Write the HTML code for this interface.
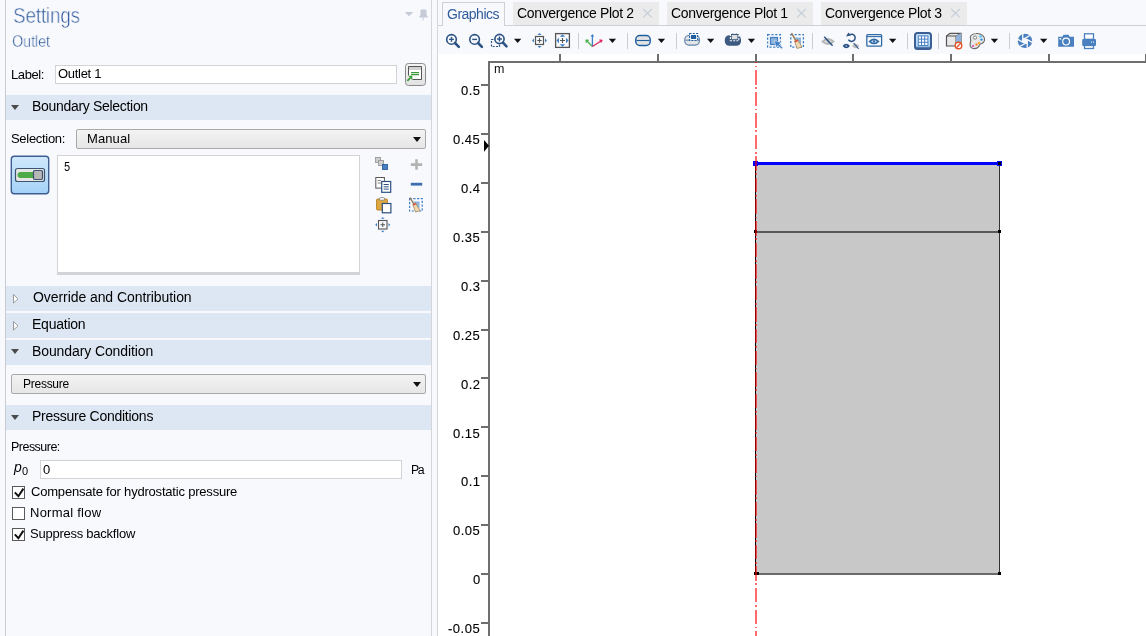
<!DOCTYPE html>
<html><head><meta charset="utf-8">
<style>
html,body{margin:0;padding:0;}
body{width:1146px;height:636px;overflow:hidden;position:relative;background:#f8f9fd;font-family:"Liberation Sans",sans-serif;color:#000;}
.a{position:absolute;}
.t{position:absolute;white-space:nowrap;line-height:1;will-change:transform;}
.hdr{position:absolute;left:6px;width:425px;height:25px;background:#dde7f3;}
.tri-d{position:absolute;width:0;height:0;border-left:4.7px solid transparent;border-right:4.7px solid transparent;border-top:5.6px solid #4a4a4a;}
.tri-r{position:absolute;}
.chk{position:absolute;left:12px;width:11px;height:11px;border:1px solid #5a5a5a;background:#fff;}
.dd{position:absolute;border:1px solid #a9a9a9;border-radius:2px;background:linear-gradient(#f3f3f3,#e6e6e6);}
.dtri{position:absolute;width:0;height:0;border-left:4px solid transparent;border-right:4px solid transparent;border-top:5px solid #111;}
.inp{position:absolute;background:#fff;border:1px solid #d3d3d6;}
.tab{position:absolute;top:2px;height:23px;background:#ebebeb;}
</style></head>
<body>
<!-- left panel -->
<div class="a" style="left:0;top:0;width:5px;height:636px;background:#f8f9fc"></div>
<div class="a" style="left:5px;top:0;width:1px;height:636px;background:#c9cbd0"></div>
<div class="a" style="left:431px;top:0;width:1px;height:636px;background:#d4d6da"></div>
<div class="a" style="left:437px;top:0;width:1px;height:636px;background:#d4d6da"></div>

<div class="t" style="left:13.4px;top:5.4px;font-size:22px;color:#2f5a9b;letter-spacing:-0.2px;transform:scaleX(0.86);transform-origin:0 0;-webkit-text-stroke:0.55px #f8f9fd">Settings</div>
<div class="t" style="left:12.2px;top:33.5px;font-size:16px;color:#2f5a9b;letter-spacing:-0.1px;transform:scaleX(0.9);transform-origin:0 0;-webkit-text-stroke:0.4px #f8f9fd">Outlet</div>

<!-- pin icons -->
<div class="tri-d" style="left:405px;top:12px;border-top-color:#c3cad6;border-left-width:4px;border-right-width:4px;border-top-width:4px"></div>

<div class="t" style="left:10.5px;top:67.8px;font-size:13px;letter-spacing:-0.4px">Label:</div>
<div class="inp" style="left:55px;top:65px;width:340px;height:17px"></div>
<div class="t" style="left:58px;top:67px;font-size:13px;letter-spacing:-0.3px">Outlet 1</div>

<div class="hdr" style="top:95px"></div>
<div class="tri-d" style="left:10.8px;top:104.5px"></div>
<div class="t" style="left:31.5px;top:99.4px;font-size:14px;letter-spacing:-0.31px">Boundary Selection</div>

<div class="t" style="left:10.7px;top:132px;font-size:13px;letter-spacing:-0.3px">Selection:</div>
<div class="dd" style="left:76px;top:129px;width:348px;height:18px"></div>
<div class="t" style="left:87.3px;top:132px;font-size:13px;letter-spacing:0.1px">Manual</div>
<div class="dtri" style="left:413px;top:137px"></div>

<div class="inp" style="left:57px;top:155px;width:301px;height:116px;border-bottom-width:3px"></div>
<div class="t" style="left:64.3px;top:160px;font-size:13px;transform:scaleX(0.85);transform-origin:0 0">5</div>

<div class="hdr" style="top:286px"></div>
<div class="t" style="left:32.7px;top:290px;font-size:14px;letter-spacing:-0.07px">Override and Contribution</div>
<div class="hdr" style="top:313px"></div>
<div class="t" style="left:32px;top:317px;font-size:14px;letter-spacing:-0.23px">Equation</div>
<div class="hdr" style="top:340px"></div>
<div class="tri-d" style="left:10.8px;top:349.3px"></div>
<div class="t" style="left:32px;top:344px;font-size:14px;letter-spacing:-0.1px">Boundary Condition</div>

<div class="dd" style="left:11px;top:374px;width:413px;height:18px"></div>
<div class="t" style="left:23.2px;top:377.8px;font-size:12px;letter-spacing:-0.26px">Pressure</div>
<div class="dtri" style="left:413px;top:382px"></div>

<div class="hdr" style="top:405px"></div>
<div class="tri-d" style="left:10.8px;top:414.7px"></div>
<div class="t" style="left:31.7px;top:409px;font-size:14px;letter-spacing:-0.26px">Pressure Conditions</div>

<div class="t" style="left:10.7px;top:441.4px;font-size:12.5px;letter-spacing:-0.52px">Pressure:</div>
<div class="t" style="left:13.8px;top:459.6px;font-size:14px;font-style:italic">p</div><div class="t" style="left:22.4px;top:465.8px;font-size:11px">0</div>
<div class="inp" style="left:40px;top:460px;width:360px;height:17px"></div>
<div class="t" style="left:43px;top:463px;font-size:13px">0</div>
<div class="t" style="left:411.1px;top:463.8px;font-size:12.3px;letter-spacing:-1.5px">Pa</div>

<div class="chk" style="top:486px"></div>
<div class="t" style="left:30.9px;top:484.6px;font-size:13px;letter-spacing:-0.2px">Compensate for hydrostatic pressure</div>
<div class="chk" style="top:507px"></div>
<div class="t" style="left:30.3px;top:505.6px;font-size:13px;letter-spacing:0.24px">Normal flow</div>
<div class="chk" style="top:528px"></div>
<div class="t" style="left:30.3px;top:526.6px;font-size:13px;letter-spacing:-0.24px">Suppress backflow</div>

<!-- right panel -->
<div class="a" style="left:438px;top:0;width:708px;height:54px;background:#f8f9fd"></div>
<div class="a" style="left:438px;top:25px;width:708px;height:1px;background:#d0d0d4"></div>
<div class="a" style="left:442px;top:2px;width:61px;height:23px;background:#f8f9fd;border:1px solid #cfd0d4;border-bottom:none"></div>
<div class="t" style="left:447px;top:7px;font-size:14px;color:#2f5a9b;letter-spacing:-0.5px">Graphics</div>
<div class="tab" style="left:513px;width:146px"></div>
<div class="t" style="left:517px;top:6px;font-size:14px;letter-spacing:-0.35px">Convergence Plot 2</div>
<div class="tab" style="left:667px;width:146px"></div>
<div class="t" style="left:671px;top:6px;font-size:14px;letter-spacing:-0.35px">Convergence Plot 1</div>
<div class="tab" style="left:821px;width:146px"></div>
<div class="t" style="left:825px;top:6px;font-size:14px;letter-spacing:-0.35px">Convergence Plot 3</div>

<div class="a" style="left:438px;top:54px;width:708px;height:582px;background:#fff"></div>

<svg class="a" style="left:0;top:0" width="1146" height="636" viewBox="0 0 1146 636">
<!-- ===== PLOT ===== -->
<g shape-rendering="crispEdges">
<rect x="756" y="163" width="243" height="410" fill="#c8c8c8"/>
<!-- top ticks -->
<rect x="559" y="54" width="2" height="8" fill="#6e6e6e"/>
<rect x="657" y="54" width="2" height="8" fill="#6e6e6e"/>
<rect x="755" y="54" width="2" height="8" fill="#6e6e6e"/>
<rect x="852" y="54" width="2" height="8" fill="#6e6e6e"/>
<rect x="950" y="54" width="2" height="8" fill="#6e6e6e"/>
<rect x="1048" y="54" width="2" height="8" fill="#6e6e6e"/>
<rect x="1145" y="54" width="1" height="8" fill="#6e6e6e"/>
<!-- frame -->
<rect x="488" y="61" width="658" height="2" fill="#6e6e6e"/>
<rect x="488" y="61" width="2" height="575" fill="#6e6e6e"/>
<!-- left ticks -->
<rect x="481" y="84" width="8" height="2" fill="#6e6e6e"/>
<rect x="481" y="133" width="8" height="2" fill="#6e6e6e"/>
<rect x="481" y="182" width="8" height="2" fill="#6e6e6e"/>
<rect x="481" y="231" width="8" height="2" fill="#6e6e6e"/>
<rect x="481" y="280" width="8" height="2" fill="#6e6e6e"/>
<rect x="481" y="329" width="8" height="2" fill="#6e6e6e"/>
<rect x="481" y="377" width="8" height="2" fill="#6e6e6e"/>
<rect x="481" y="426" width="8" height="2" fill="#6e6e6e"/>
<rect x="481" y="475" width="8" height="2" fill="#6e6e6e"/>
<rect x="481" y="524" width="8" height="2" fill="#6e6e6e"/>
<rect x="481" y="573" width="8" height="2" fill="#6e6e6e"/>
<rect x="481" y="622" width="8" height="2" fill="#6e6e6e"/>
<!-- geometry edges -->
<rect x="756" y="231" width="243" height="2" fill="#5a5a5a"/>
<rect x="756" y="573" width="243" height="2" fill="#6a6a6a"/>
<rect x="755" y="163" width="1" height="411" fill="#000"/>
<rect x="999" y="163" width="1" height="411" fill="#333"/>
<rect x="754" y="230" width="3" height="3" fill="#000"/>
<rect x="998" y="230" width="3" height="3" fill="#000"/>
<rect x="754" y="572" width="5" height="3" fill="#000"/>
<rect x="998" y="572" width="3" height="3" fill="#000"/>
</g>
<!-- symmetry axis -->
<g shape-rendering="crispEdges">
<rect x="753" y="162" width="248" height="3" fill="#0000ff"/>
<rect x="753" y="161" width="5" height="5" fill="#0000ff"/>
<rect x="997" y="161" width="5" height="5" fill="#0000ff"/>
<rect x="998" y="162" width="3" height="3" fill="#000"/>
</g>
<line x1="756" y1="62" x2="756" y2="636" stroke="#ff0000" stroke-opacity="0.58" stroke-width="2" stroke-dasharray="14.5 2.6 1.8 2.68" stroke-dashoffset="13.58" shape-rendering="crispEdges"/>
<!-- marker -->
<path d="M484 140 L489 145.7 L484 151.7 Z" fill="#000"/>
</svg>

<svg class="a" style="left:0;top:0" width="1146" height="636" viewBox="0 0 1146 636">
<defs>
<linearGradient id="gbtn" x1="0" y1="0" x2="0" y2="1"><stop offset="0" stop-color="#cfe8fc"/><stop offset="1" stop-color="#a5d2f7"/></linearGradient>
<linearGradient id="gbtn2" x1="0" y1="0" x2="0" y2="1"><stop offset="0" stop-color="#f4f4f4"/><stop offset="1" stop-color="#e2e2e2"/></linearGradient>
</defs>
<!-- ===== TOOLBAR ===== -->
<g fill="none" stroke="#2b5283" stroke-width="1.6">
 <circle cx="451.5" cy="39.4" r="4.8"/>
 <path d="M455 43 L458.8 46.8" stroke-width="2.6" stroke-linecap="round"/>
 <path d="M451.5 37 V41.8 M449.1 39.4 H453.9" stroke-width="1.4"/>
 <circle cx="474.6" cy="39.4" r="4.8"/>
 <path d="M478.1 43 L481.9 46.8" stroke-width="2.6" stroke-linecap="round"/>
 <path d="M472.2 39.4 H477" stroke-width="1.4"/>
 <rect x="491.5" y="39.5" width="8" height="7" stroke-dasharray="2 1.3" stroke-width="1.2"/>
 <circle cx="499.5" cy="39" r="4.6" fill="#f8f9fd"/>
 <path d="M503 42.6 L506.5 46.3" stroke-width="2.6" stroke-linecap="round"/>
 <path d="M499.5 36.6 V41.4 M497.1 39 H501.9" stroke-width="1.4"/>
</g>
<g fill="#111">
 <path d="M514 38.8 H521.3 L517.65 43 Z"/>
 <path d="M608.8 38.8 H616.1 L612.45 43 Z"/>
 <path d="M657.8 38.8 H665.1 L661.45 43 Z"/>
 <path d="M707 38.8 H714.3 L710.65 43 Z"/>
 <path d="M747.8 38.8 H755.1 L751.45 43 Z"/>
 <path d="M889 38.8 H896.3 L892.65 43 Z"/>
 <path d="M990.8 38.8 H998.1 L994.45 43 Z"/>
 <path d="M1040 38.8 H1047.3 L1043.65 43 Z"/>
</g>
<!-- zoom center -->
<g>
 <rect x="535.5" y="36.5" width="8" height="8" fill="none" stroke="#555" stroke-width="1.2"/>
 <path d="M539.5 38.3 V42.7 M537.3 40.5 H541.7" stroke="#555" stroke-width="1.1"/>
 <path d="M537.5 35 L539.5 33 L541.5 35Z M537.5 46 L539.5 48 L541.5 46Z M534 38.5 L532 40.5 L534 42.5Z M545 38.5 L547 40.5 L545 42.5Z" fill="#3d7ec4"/>
 <rect x="555.6" y="33.6" width="13.8" height="13.8" fill="none" stroke="#555" stroke-width="1.3"/>
 <path d="M562.5 38 V43 M560 40.5 H565" stroke="#555" stroke-width="1.1"/>
 <path d="M559.8 36.8 L562.5 34.2 L565.2 36.8Z M559.8 44.2 L562.5 46.8 L565.2 44.2Z M559 37.8 L556.4 40.5 L559 43.2Z M566 37.8 L568.6 40.5 L566 43.2Z" fill="#3d7ec4"/>
</g>
<g fill="#cdcdcd">
 <rect x="578" y="33" width="1" height="16"/>
 <rect x="627" y="33" width="1" height="16"/>
 <rect x="676" y="33" width="1" height="16"/>
 <rect x="812" y="33" width="1" height="16"/>
 <rect x="907" y="33" width="1" height="16"/>
 <rect x="938" y="33" width="1" height="16"/>
 <rect x="1009" y="33" width="1" height="16"/>
</g>
<!-- axes icon -->
<g stroke-width="1.3" fill="none">
 <path d="M592.4 46.5 V35" stroke="#3d7ec4"/><path d="M590.6 36.6 L592.4 34 L594.2 36.6Z" fill="#3d7ec4"/>
 <path d="M592.4 46.5 L587 41" stroke="#4caf50"/><path d="M586 42.8 L585.8 39.8 L588.8 40Z" fill="#4caf50" stroke="#4caf50" stroke-width="0.6"/>
 <path d="M592.4 46.5 L601 41" stroke="#e0245e"/><path d="M599.6 39.8 L602.4 40 L601.2 42.6Z" fill="#e0245e" stroke="#e0245e" stroke-width="0.6"/>
</g>
<!-- rounded rect -->
<rect x="635.8" y="35.6" width="14.4" height="9.8" rx="4" fill="#e3e3e3" stroke="#1f5fa0" stroke-width="1.5"/>
<path d="M636.5 40.5 H649.5" stroke="#1f5fa0" stroke-width="1.1"/>
<!-- select boundary icons -->
<rect x="684.8" y="35.5" width="14.6" height="9.6" rx="4" fill="#e4e4e4" stroke="#5f82ad" stroke-width="1.2"/>
<path d="M685.5 40.2 H699" stroke="#5f82ad" stroke-width="1"/>
<rect x="689.6" y="33.5" width="8" height="7" fill="#fff" stroke="#1f5fa0" stroke-width="1.1" stroke-dasharray="2 1.2"/>
<rect x="691" y="35" width="5.2" height="4" fill="#1f5fa0"/>
<rect x="724.8" y="35.2" width="16.2" height="10.5" rx="4.5" fill="#3d5a80"/>
<rect x="730.4" y="33.5" width="8.4" height="7.2" fill="#3d5a80" stroke="#fff" stroke-width="1.1" stroke-dasharray="2 1.2"/>
<rect x="731.8" y="35" width="5.6" height="4.2" fill="#dedede"/>
<!-- select box -->
<rect x="767.6" y="34.6" width="12.8" height="12.6" fill="none" stroke="#3d7ec4" stroke-width="1.3" stroke-dasharray="2.2 1.6"/>
<rect x="770.5" y="37.5" width="7" height="7" fill="#8fb4dc" stroke="#3d7ec4" stroke-width="1.2"/>
<path d="M774.2 40.6 L781.4 42.6 L779.2 44.2 L782.8 47.8 L781.6 49 L778 45.4 L776.4 47.6Z" fill="#3d7ec4" stroke="#f8f9fd" stroke-width="0.5"/>
<!-- broom box -->
<rect x="790.8" y="34.6" width="12.6" height="12.6" fill="none" stroke="#3d7ec4" stroke-width="1.3" stroke-dasharray="2.2 1.6"/>
<path d="M794 37.5 H801 V44.5Z" fill="#8fb4dc"/>
<path d="M791.5 33.2 L796 41" stroke="#9a7a52" stroke-width="1.5"/>
<path d="M794.5 41 L797.5 39.5 L802 47 L797 48.5Z" fill="#f0d9b0" stroke="#9a7a52" stroke-width="0.7"/>
<path d="M794.5 41 L797.5 39.5 L798.3 40.9 L795.2 42.4Z" fill="#e0533a"/>
<!-- hide -->
<path d="M821 41.6 Q828 34.6 835 41.6 Q828 48.6 821 41.6Z" fill="#b7b7b7"/>
<path d="M824.2 41.6 Q828 38.6 831.8 41.6 Q828 44.6 824.2 41.6Z" fill="#e2e2e2"/>
<circle cx="828" cy="41.6" r="1.3" fill="#b7b7b7"/>
<path d="M824.2 36.8 L832.6 45.8" stroke="#2b5283" stroke-width="1.5"/>
<!-- reset hiding -->
<path d="M848.4 39.6 A3.6 3.6 0 1 0 849.7 34.7" fill="none" stroke="#2b5283" stroke-width="1.5"/>
<path d="M846 36.4 L848.4 32.6 L851 35.6Z" fill="#2b5283"/>
<path d="M842.6 46 Q846.3 41.6 850 46 Q846.3 50.4 842.6 46Z" fill="#2b5283"/>
<circle cx="846.3" cy="46" r="1" fill="#8aa6cc"/>
<path d="M852 46 Q855.6 41.6 859.2 46 Q855.6 50.4 852 46Z" fill="#bdbdbd"/>
<path d="M853.6 43 L858.6 48.8" stroke="#2b5283" stroke-width="1.1"/>
<!-- view window -->
<rect x="866.8" y="34.6" width="14.8" height="11.6" rx="1" fill="none" stroke="#2f6aa6" stroke-width="1.3"/>
<path d="M867 36.6 H881.5" stroke="#2f6aa6" stroke-width="1.1"/>
<path d="M868.4 41.4 Q874 35.6 879.6 41.4 Q874 47.2 868.4 41.4Z" fill="#2f6aa6"/>
<path d="M871 41.4 Q874 39 877 41.4 Q874 43.8 871 41.4Z" fill="#cfe0f0"/>
<circle cx="874" cy="41.4" r="1.1" fill="#2f6aa6"/>
<!-- grid button -->
<rect x="915" y="32.9" width="16" height="16" rx="2.5" fill="url(#gbtn)" stroke="#3b5f94" stroke-width="2"/>
<path d="M916 47.3 H930" stroke="#3b5f94" stroke-width="1"/>
<rect x="918.3" y="35.9" width="9.6" height="9.6" fill="#fff" stroke="#4a7fc0" stroke-width="1"/>
<path d="M921.5 35.9 V45.5 M924.7 35.9 V45.5 M918.3 39.1 H927.9 M918.3 42.3 H927.9" stroke="#4a7fc0" stroke-width="1"/>
<!-- box prohibited -->
<path d="M946.5 36 L950 33.3 H961 V43.5 L956 46 H946.5Z" fill="#e8e8e8" stroke="#555" stroke-width="1.2"/>
<path d="M946.5 36 H956 V46 M956 36 L961 33.3" fill="none" stroke="#555" stroke-width="1"/>
<path d="M956 36 L961 33.3 V43.5 L956 46Z" fill="#8fb0d8"/>
<circle cx="958.5" cy="45.5" r="3.3" fill="#fff" stroke="#e2542b" stroke-width="1.4"/>
<path d="M956.3 47.7 L960.7 43.3" stroke="#e2542b" stroke-width="1.3"/>
<!-- palette -->
<path d="M976 33.5 C981 33 985 36 984.5 40.5 C984 44 980.5 43 979.5 45 C978.5 47.5 976 49 973 48.5 C970 48 969.5 45 970.5 42 C971.5 39 969 38 971 35.5 C972 34.3 974 33.6 976 33.5Z" fill="#e6e6e6" stroke="#6a6a6a" stroke-width="1.1"/>
<circle cx="975" cy="37.6" r="1.6" fill="#fff" stroke="#777" stroke-width="0.9"/>
<circle cx="980.5" cy="36.5" r="1.2" fill="#4fc3f7"/>
<circle cx="981.5" cy="39.6" r="1.2" fill="#2f8ee0"/>
<circle cx="979" cy="43" r="1.2" fill="#ffa726"/>
<circle cx="976.5" cy="44.5" r="1.2" fill="#ff8a3d"/>
<circle cx="973" cy="46" r="1.1" fill="#e040c0"/>
<!-- aperture -->
<circle cx="1025" cy="40.9" r="7.2" fill="#4a80bf"/>
<path d="M1027.25 39.60 L1027.25 42.20 L1025.00 43.50 L1022.75 42.20 L1022.75 39.60 L1025.00 38.30Z" fill="#f8f9fd"/>
<path d="M1025.00 38.30 L1032.05 42.37 M1027.25 39.60 L1027.25 47.74 M1027.25 42.20 L1020.20 46.27 M1025.00 43.50 L1017.95 39.43 M1022.75 42.20 L1022.75 34.06 M1022.75 39.60 L1029.80 35.53" stroke="#f8f9fd" stroke-width="1.3"/>
<!-- camera -->
<path d="M1058.2 36.8 H1062.4 L1063.4 34.8 H1068.6 L1069.6 36.8 H1074 V46.8 H1058.2Z" fill="#4a80bf"/>
<circle cx="1066.1" cy="41.6" r="3.4" fill="none" stroke="#fff" stroke-width="1.2"/>
<rect x="1059.6" y="38" width="1.6" height="1.6" fill="#fff"/>
<!-- printer -->
<rect x="1084.5" y="33.8" width="9" height="5.5" fill="#fff" stroke="#4a80bf" stroke-width="1.3"/>
<rect x="1082.2" y="38.9" width="13.8" height="7" rx="1" fill="#4a80bf"/>
<rect x="1084.5" y="45.5" width="9" height="3" fill="#fff" stroke="#4a80bf" stroke-width="1.3"/>
<rect x="1091" y="41.6" width="1" height="1" fill="#fff"/><rect x="1093" y="41.6" width="1" height="1" fill="#fff"/>

<!-- ===== LEFT PANEL ICONS ===== -->
<!-- pin -->
<path d="M405 12 H413 L409 16Z" fill="#c5ccd8"/>
<path d="M421 10 H426 V15 L427.5 17 H419.5 L421 15Z M423 17 V20.5" fill="#c5ccd8" stroke="#c5ccd8" stroke-width="1"/>
<!-- label button -->
<rect x="405.5" y="63.5" width="20" height="22" rx="3" fill="url(#gbtn2)" stroke="#8a8a8a" stroke-width="1"/>
<rect x="409" y="67" width="12" height="12" fill="#fff"/>
<rect x="409" y="67" width="12" height="3" fill="#d2d2d2"/>
<path d="M408.5 75.5 V66.5 H421.5 V79.5 H412.5" fill="none" stroke="#555" stroke-width="1"/>
<path d="M411 72.6 H419 M411 74.6 H419" stroke="#3d9a3a" stroke-width="1.1"/>
<path d="M407.3 80.8 L410.3 77.8" stroke="#3d9a3a" stroke-width="1.8"/>
<path d="M408.2 75.8 H412.3 V79.9Z" fill="#3d9a3a"/>
<!-- toggle -->
<rect x="11.3" y="156.3" width="37.4" height="37.4" rx="3" fill="url(#gbtn)" stroke="#3f5f92" stroke-width="1.4"/>
<rect x="15.5" y="168.5" width="29" height="13" rx="2" fill="#e6e6e6" stroke="#3d5370" stroke-width="1.2"/>
<path d="M20.5 172 H33 V178 H20.5 A3 3 0 0 1 20.5 172Z" fill="#4faa48"/>
<rect x="33.5" y="170.5" width="9" height="9" rx="1.2" fill="#b7b7b7" stroke="#3d5370" stroke-width="1.2"/>
<!-- list tool icons -->
<g>
 <rect x="375.5" y="157.5" width="5" height="5" fill="#cfcfcf" stroke="#9a9a9a" stroke-width="0.9"/>
 <rect x="378.5" y="160.5" width="5" height="5" fill="#cfcfcf" stroke="#9a9a9a" stroke-width="0.9"/>
 <rect x="382.5" y="164.5" width="5" height="5" fill="#4a80bf" stroke="#2e5f9e" stroke-width="0.9"/>
 <rect x="375.8" y="177.5" width="8.6" height="10.6" fill="#fff" stroke="#555" stroke-width="1"/>
 <path d="M377.5 180.5 H381 M377.5 183 H381" stroke="#777" stroke-width="0.9"/>
 <rect x="381.7" y="181.5" width="9" height="10.8" fill="#fff" stroke="#2b4f7e" stroke-width="1.2"/>
 <path d="M383.6 184.5 H388.8 M383.6 186.8 H388.8 M383.6 189.1 H388.8" stroke="#2b4f7e" stroke-width="1"/>
 <rect x="376.6" y="199" width="10.8" height="11" rx="1" fill="#e0a840" stroke="#b07c20" stroke-width="0.9"/>
 <rect x="379.5" y="197.6" width="5" height="2.6" rx="1" fill="#fff" stroke="#777" stroke-width="0.8"/>
 <rect x="382.3" y="203.5" width="8.6" height="9.3" fill="#fff" stroke="#2b4f7e" stroke-width="1.2"/>
 <rect x="378.5" y="220.5" width="8.5" height="8.5" fill="none" stroke="#555" stroke-width="1.1"/>
 <path d="M382.75 222.5 V227 M380.5 224.75 H385" stroke="#555" stroke-width="1"/>
 <path d="M381 218.8 L382.75 217 L384.5 218.8Z M381 230.7 L382.75 232.5 L384.5 230.7Z M377 223 L375.2 224.75 L377 226.5Z M388.5 223 L390.3 224.75 L388.5 226.5Z" fill="#3d7ec4"/>
 <path d="M410.8 164.6 H422.2 M416.5 159.3 V169.8" stroke="#b3b3b3" stroke-width="2.6"/>
 <path d="M410.8 184.2 H422.2" stroke="#3d6fb0" stroke-width="2.8"/>
 <rect x="409.6" y="198.6" width="12.6" height="12.4" fill="none" stroke="#3d7ec4" stroke-width="1.2" stroke-dasharray="2.2 1.5"/>
 <path d="M412.5 201.5 H419.5 V208.5Z" fill="#8fb4dc"/>
 <path d="M410 197.5 L414 204.5" stroke="#9a7a52" stroke-width="1.4"/>
 <path d="M412.8 204.5 L415.5 203 L420 210.6 L415.5 212Z" fill="#f0d9b0" stroke="#9a7a52" stroke-width="0.7"/>
 <path d="M412.8 204.5 L415.5 203 L416.3 204.3 L413.5 205.8Z" fill="#e0533a"/>
</g>
<!-- checkboxes -->
<path d="M14.8 492.4 L18.4 496.2 L23.4 488.6" fill="none" stroke="#111" stroke-width="2"/>
<path d="M14.8 534.4 L18.4 538.2 L23.4 530.6" fill="none" stroke="#111" stroke-width="2"/>

<!-- tab close x -->
<path d="M643.2 9 L651.8 17.4 M651.8 9 L643.2 17.4" stroke="#c3ceda" stroke-width="1.1"/>
<path d="M797.2 9 L805.8 17.4 M805.8 9 L797.2 17.4" stroke="#c3ceda" stroke-width="1.1"/>
<path d="M951.2 9 L959.8 17.4 M959.8 9 L951.2 17.4" stroke="#c3ceda" stroke-width="1.1"/>
<!-- outline triangles -->
<path d="M13.5 294.5 L18 298.8 L13.5 303.1Z" fill="#fff" stroke="#9a9a9a" stroke-width="1"/>
<path d="M13.5 321.5 L18 325.8 L13.5 330.1Z" fill="#fff" stroke="#9a9a9a" stroke-width="1"/>
</svg>

<div id="ylab">
<div class="t" style="right:665.5px;top:84.0px;font-size:13px;letter-spacing:0.5px;color:#000;-webkit-text-stroke:0.12px #000">0.5</div>
<div class="t" style="right:665.5px;top:133.0px;font-size:13px;letter-spacing:0.5px;color:#000;-webkit-text-stroke:0.12px #000">0.45</div>
<div class="t" style="right:665.5px;top:182.0px;font-size:13px;letter-spacing:0.5px;color:#000;-webkit-text-stroke:0.12px #000">0.4</div>
<div class="t" style="right:665.5px;top:231.0px;font-size:13px;letter-spacing:0.5px;color:#000;-webkit-text-stroke:0.12px #000">0.35</div>
<div class="t" style="right:665.5px;top:280.0px;font-size:13px;letter-spacing:0.5px;color:#000;-webkit-text-stroke:0.12px #000">0.3</div>
<div class="t" style="right:665.5px;top:329.0px;font-size:13px;letter-spacing:0.5px;color:#000;-webkit-text-stroke:0.12px #000">0.25</div>
<div class="t" style="right:665.5px;top:378.0px;font-size:13px;letter-spacing:0.5px;color:#000;-webkit-text-stroke:0.12px #000">0.2</div>
<div class="t" style="right:665.5px;top:427.0px;font-size:13px;letter-spacing:0.5px;color:#000;-webkit-text-stroke:0.12px #000">0.15</div>
<div class="t" style="right:665.5px;top:475.0px;font-size:13px;letter-spacing:0.5px;color:#000;-webkit-text-stroke:0.12px #000">0.1</div>
<div class="t" style="right:665.5px;top:524.0px;font-size:13px;letter-spacing:0.5px;color:#000;-webkit-text-stroke:0.12px #000">0.05</div>
<div class="t" style="right:665.5px;top:573.0px;font-size:13px;letter-spacing:0.5px;color:#000;-webkit-text-stroke:0.12px #000">0</div>
<div class="t" style="right:665.5px;top:622.0px;font-size:13px;letter-spacing:0.5px;color:#000;-webkit-text-stroke:0.12px #000">-0.05</div>
<div class="t" style="left:493.5px;top:62.5px;font-size:12.5px;color:#111">m</div>
</div>
</body></html>
